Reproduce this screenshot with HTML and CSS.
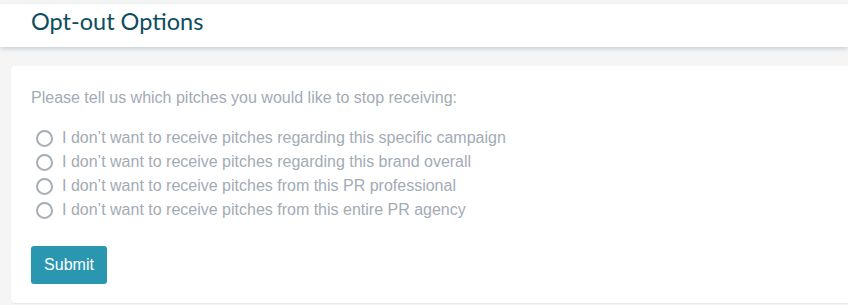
FILE: index.html
```html
<!DOCTYPE html>
<html>
<head>
<meta charset="utf-8">
<link rel="stylesheet" href="styles.css">
</head>
<body>
<header class="topbar">
  <h1 class="title">Opt-out Options</h1>
</header>
<main class="content">
  <form class="card">
    <p class="prompt">Please tell us which pitches you would like to stop receiving:</p>
    <div class="options">
      <label class="option"><span class="radio"></span>I don’t want to receive pitches regarding this specific campaign</label>
      <label class="option"><span class="radio"></span>I don’t want to receive pitches regarding this brand overall</label>
      <label class="option"><span class="radio"></span>I don’t want to receive pitches from this PR professional</label>
      <label class="option"><span class="radio"></span>I don’t want to receive pitches from this entire PR agency</label>
    </div>
    <button type="button" class="submit">Submit</button>
  </form>
</main>
</body>
</html>
```
FILE: styles.css
```css
html, body {
  margin: 0;
  padding: 0;
}
body {
  background: #f5f5f5;
  font-family: "Liberation Sans", Arial, sans-serif;
  padding-top: 4px;
  overflow: hidden;
  height: 305px;
  box-sizing: border-box;
}
.topbar {
  background: #fff;
  height: 43px;
  box-shadow: 0 2px 4px rgba(120, 140, 160, 0.35);
  display: flex;
  align-items: center;
  padding-left: 31px;
  position: relative;
}
.title {
  margin: 0;
  font-family: "Lato", "Open Sans", sans-serif;
  font-weight: 400;
  font-size: 23.5px;
  color: #0e4d61;
  letter-spacing: 0;
  margin-top: -10px;
}
.content {
  padding: 19px 0 0 11px;
}
.card {
  background: #fff;
  border-radius: 4px 0 0 4px;
  padding: 22px 20px 20px 20px;
  height: 237px;
  box-sizing: border-box;
  box-shadow: 0 1px 1px rgba(0,0,0,0.06);
}
.prompt {
  margin: 0 0 18px 0;
  font-size: 16px;
  line-height: 20px;
  color: #a3abb5;
}
.options {
  display: flex;
  flex-direction: column;
}
.option {
  display: flex;
  align-items: center;
  font-size: 16px;
  line-height: 24px;
  height: 24px;
  color: #a3abb5;
}
.radio {
  width: 13px;
  height: 13px;
  border: 2px solid #a8adb3;
  border-radius: 50%;
  margin: 0 9px 0 5px;
  flex: none;
}
.submit {
  margin-top: 24px;
  background: #2b96af;
  color: #fff;
  border: none;
  border-radius: 3px;
  font-family: "Liberation Sans", Arial, sans-serif;
  font-size: 16px;
  width: 76px;
  height: 38px;
  padding: 0;
}
```
